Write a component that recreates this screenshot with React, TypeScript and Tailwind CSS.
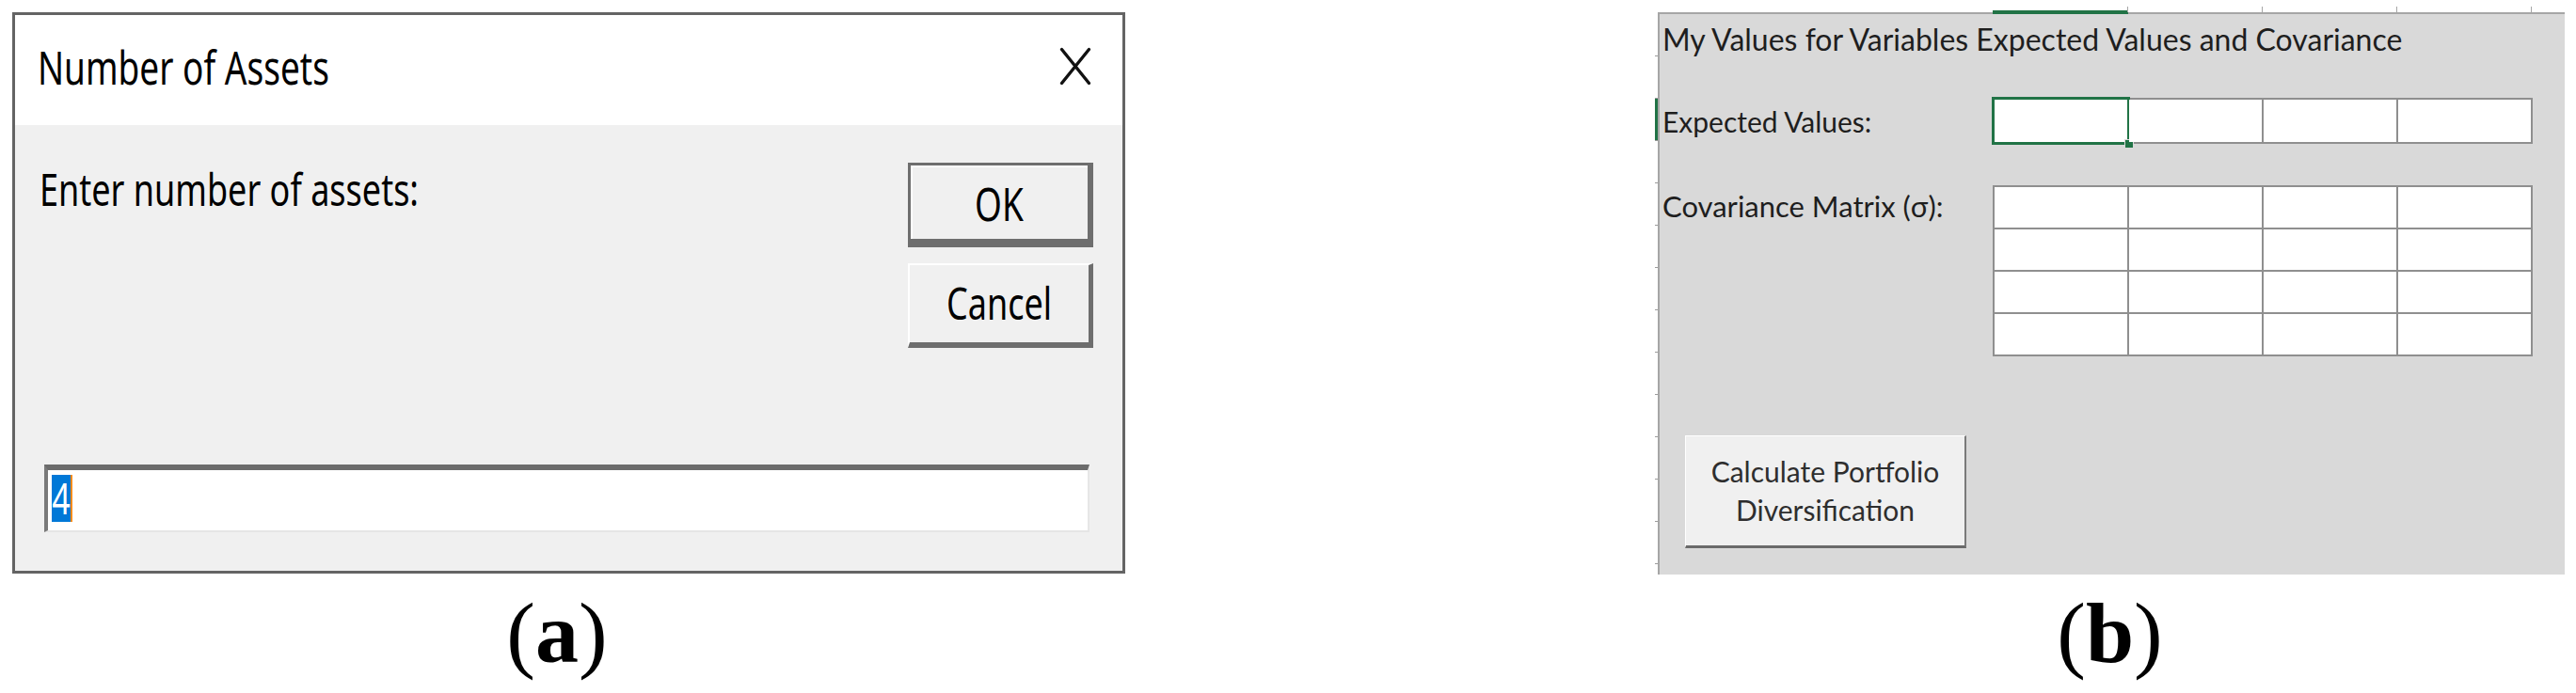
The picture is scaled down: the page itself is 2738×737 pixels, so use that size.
import React from 'react';

const rowTicks = Array.from({ length: 13 }, (_, i) => i);

function CloseIcon() {
  return (
    <svg width="34" height="41" viewBox="0 0 34 41" className="mt-[4px] shrink-0">
      <path d="M2.5 2.5L31.5 38.5M31.5 2.5L2.5 38.5" stroke="#111" strokeWidth="3.4" strokeLinecap="round" />
    </svg>
  );
}

function InputBoxDialog() {
  return (
    <div className="flex h-[597px] w-[1183px] flex-col border-[3px] border-[#646464] font-['Noto_Sans',sans-serif] text-black">
      <div className="flex h-[117px] shrink-0 items-start justify-between bg-white pl-[24px] pr-[33px] pt-[30px]">
        <span className="inline-block origin-top scale-y-[1.33] text-[37px] leading-none">Number of Assets</span>
        <CloseIcon />
      </div>
      <div className="flex flex-1 flex-col bg-[#f0f0f0] pl-[26px] pr-[31px]">
        <div className="flex items-start justify-between">
          <span className="mt-[45px] inline-block origin-top scale-y-[1.33] text-[36px] leading-none">
            Enter number of assets:
          </span>
          <div className="mt-[40px] flex flex-col gap-[17px]">
            <button className="flex h-[90px] w-[197px] items-center justify-center border-t-[3px] border-l-[3px] border-r-[6px] border-b-[9px] border-[#6e6e6e] bg-[#f0f0f0] shadow-[inset_2px_2px_0_#ffffff]">
              <span className="inline-block scale-y-[1.33] text-[37px] leading-none">OK</span>
            </button>
            <button className="flex h-[90px] w-[197px] items-center justify-center border-t-2 border-l-2 border-r-[5px] border-b-[6px] border-t-white border-l-white border-r-[#6e6e6e] border-b-[#6e6e6e] bg-[#f0f0f0]">
              <span className="inline-block scale-y-[1.33] text-[36px] leading-none">Cancel</span>
            </button>
          </div>
        </div>
        <div className="ml-[5px] mr-[4px] mt-[124px] flex h-[72px] items-start border-t-[6px] border-l-[4px] border-r-2 border-b-2 border-t-[#6b6b6b] border-l-[#7a7a7a] border-r-[#e6e6e6] border-b-[#e6e6e6] bg-white pl-[4px] pt-[5px]">
          <span className="flex h-[50px] w-[20px] items-center justify-center bg-[#0078d7] text-white">
            <span className="inline-block scale-y-[1.33] text-[34px] leading-none">4</span>
          </span>
          <span className="h-[50px] w-[2px] bg-[#ff8c1a]" />
        </div>
      </div>
    </div>
  );
}

function Cell({ selected }: { selected?: boolean }) {
  return (
    <div className="relative bg-white">
      {selected && (
        <>
          <div className="absolute -inset-[3px] border-[3px] border-[#217346]" />
          <div className="absolute -bottom-[7px] -right-[7px] h-[10px] w-[10px] border border-[#d9d9d9] bg-[#217346]" />
        </>
      )}
    </div>
  );
}

function ExcelSheet() {
  return (
    <div className="flex">
      <div className="flex w-[3px] flex-col pt-[2px]">
        {rowTicks.map((i) => (
          <div
            key={i}
            className={i === 2 ? 'h-[45px] border-b border-[#9b9b9b] bg-[#217346]' : 'h-[45px] border-b border-[#9b9b9b]'}
          />
        ))}
      </div>
      <div className="relative h-[598px] w-[964px] border-l-2 border-t-2 border-[#a6a6a6] bg-[#d9d9d9] font-['Lato',sans-serif] text-[#1e1e1e]">
        <div className="absolute -top-[4px] left-[354px] h-[4px] w-[144px] bg-[#217346]" />
        <div className="absolute -top-[8px] left-[497px] flex gap-[142px]">
          <div className="h-[6px] w-px bg-[#a6a6a6]" />
          <div className="h-[6px] w-px bg-[#a6a6a6]" />
          <div className="h-[6px] w-px bg-[#a6a6a6]" />
          <div className="h-[6px] w-px bg-[#a6a6a6]" />
        </div>

        <div className="flex flex-col pl-[3px] pt-[11px]">
          <div className="text-[32px] leading-none">My Values for Variables Expected Values and Covariance</div>

          <div className="mt-[46px] flex items-center">
            <div className="w-[351px] text-[30px] leading-none">Expected Values:</div>
            <div className="grid grid-cols-[repeat(4,141px)] grid-rows-[45px] gap-[2px] bg-[#8f8f8f] p-[2px]">
              <Cell selected />
              <Cell />
              <Cell />
              <Cell />
            </div>
          </div>

          <div className="mt-[44px] flex items-start">
            <div className="mt-[7px] w-[351px] text-[31px] leading-none">Covariance Matrix (σ):</div>
            <div className="grid grid-cols-[repeat(4,141px)] grid-rows-[repeat(4,43px)] gap-[2px] bg-[#8f8f8f] p-[2px]">
              {Array.from({ length: 16 }, (_, i) => (
                <Cell key={i} />
              ))}
            </div>
          </div>

          <button className="ml-[24px] mt-[84px] flex h-[120px] w-[299px] flex-col items-center justify-center border-t border-l border-r-2 border-b-[3px] border-t-white border-l-white border-r-[#7a7a7a] border-b-[#6a6a6a] bg-[#f0f0f0] text-[30px] leading-[41px] text-[#2e2e2e]">
            <span>Calculate Portfolio</span>
            <span>Diversification</span>
          </button>
        </div>
      </div>
    </div>
  );
}

function Caption({ letter }: { letter: string }) {
  return (
    <div className="font-['Liberation_Serif',serif] text-[92px] leading-none text-black">
      (<span className="font-bold">{letter}</span>)
    </div>
  );
}

export default function App() {
  return (
    <div className="flex h-[737px] w-[2738px] items-start bg-white">
      <div className="ml-[13px] mt-[13px] flex flex-col items-center">
        <InputBoxDialog />
        <div className="mr-[25px] mt-[17px]">
          <Caption letter="a" />
        </div>
      </div>
      <div className="ml-[563px] mt-[13px] flex flex-col items-center">
        <ExcelSheet />
        <div className="mt-[16px]">
          <Caption letter="b" />
        </div>
      </div>
    </div>
  );
}
